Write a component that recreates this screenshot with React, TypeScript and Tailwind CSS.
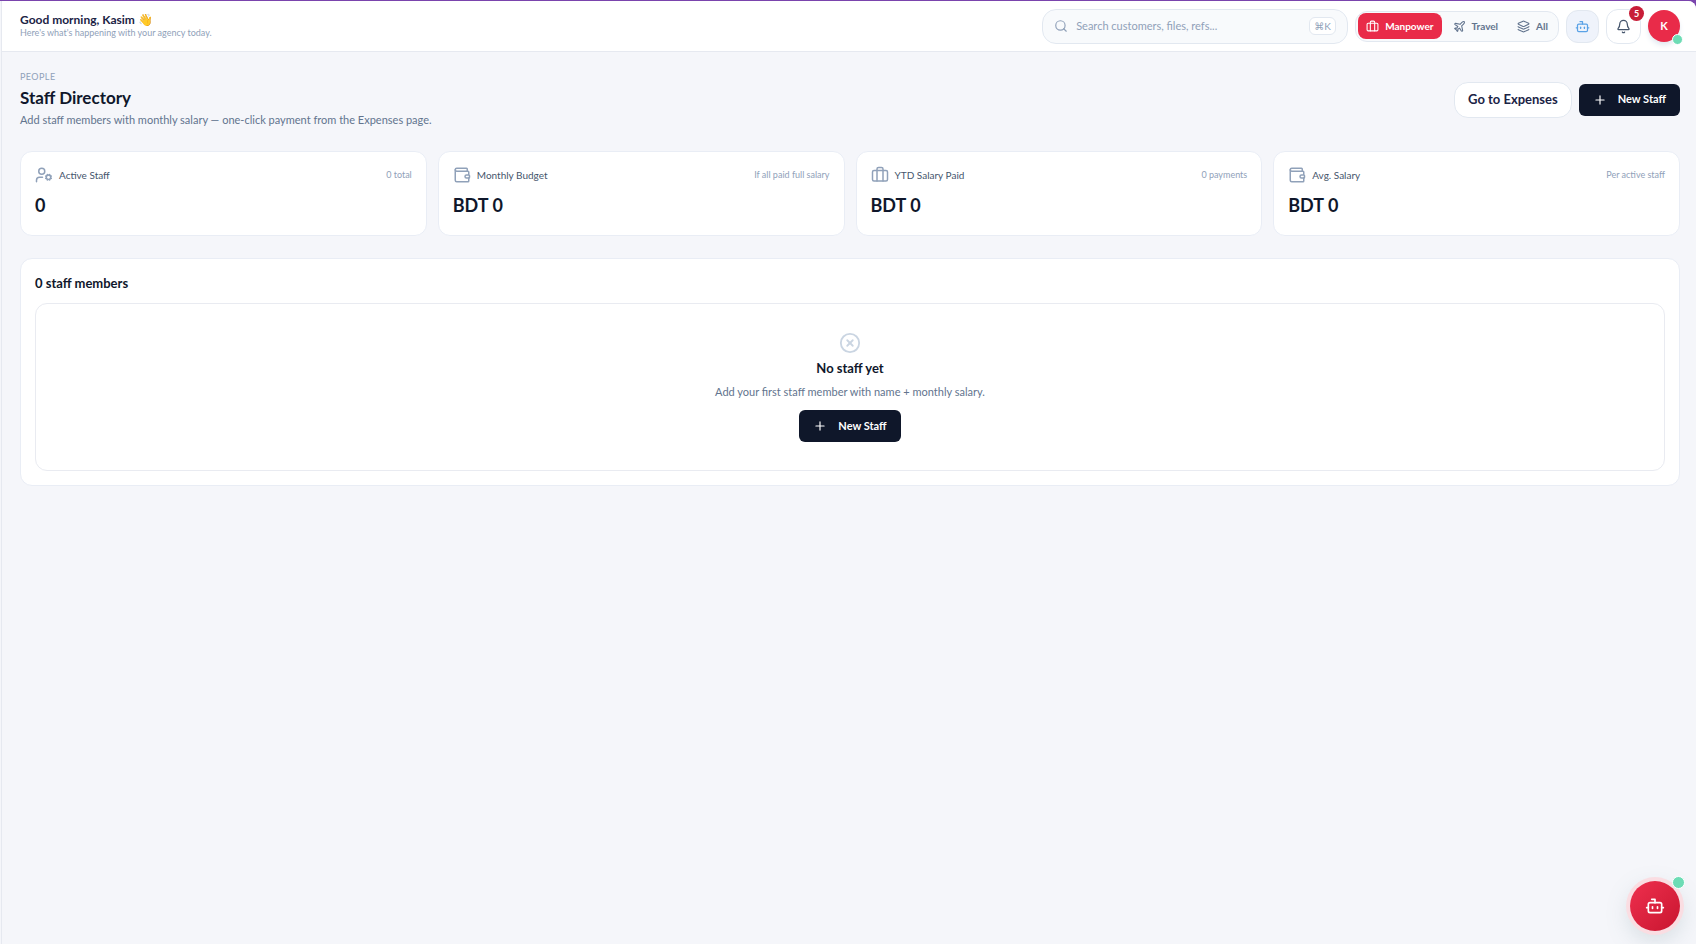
import { useState } from "react";
import type { LucideIcon } from "lucide-react";
import { Bell, Bot, Briefcase, CircleX, Layers, Plane, Plus, Search, UserCog, Wallet } from "lucide-react";
import clsx from "clsx";

interface Stat {
  icon: LucideIcon;
  label: string;
  hint: string;
  value: string;
}

const stats: Stat[] = [
  { icon: UserCog, label: "Active Staff", hint: "0 total", value: "0" },
  { icon: Wallet, label: "Monthly Budget", hint: "If all paid full salary", value: "BDT 0" },
  { icon: Briefcase, label: "YTD Salary Paid", hint: "0 payments", value: "BDT 0" },
  { icon: Wallet, label: "Avg. Salary", hint: "Per active staff", value: "BDT 0" },
];

const modes = [
  { icon: Briefcase, label: "Manpower" },
  { icon: Plane, label: "Travel" },
  { icon: Layers, label: "All" },
];

function NewStaffButton({ className }: { className?: string }) {
  return (
    <button
      className={clsx(
        "flex h-8 items-center gap-[11px] rounded-md bg-[#0f172a] px-[14px] text-[11px] font-bold text-white hover:bg-slate-800",
        className
      )}
    >
      <Plus size={14} strokeWidth={2} />
      New Staff
    </button>
  );
}

function ModeSwitch() {
  const [mode, setMode] = useState("Manpower");

  return (
    <div className="flex h-[31px] items-center gap-[3px] rounded-xl border border-slate-200 bg-slate-50 px-0.5">
      {modes.map(({ icon: Icon, label }) => (
        <button
          key={label}
          onClick={() => setMode(label)}
          className={clsx(
            "flex h-[26px] items-center gap-1.5 rounded-lg px-2 text-[10px] leading-4 font-bold",
            mode === label ? "bg-[#e92b49] text-white" : "text-slate-500"
          )}
        >
          <Icon size={13} strokeWidth={2} />
          {label}
        </button>
      ))}
    </div>
  );
}

function Header() {
  return (
    <header className="flex h-[51px] items-center justify-between border-b border-[#e6e9f0] bg-white pr-4 pl-[18px]">
      <div>
        <p className="text-[12px] leading-[14px] font-bold text-[#1b2345]">Good morning, Kasim 👋</p>
        <p className="text-[9px] leading-3 text-slate-400">Here's what's happening with your agency today.</p>
      </div>

      <div className="flex items-center gap-[7px]">
        <label className="flex h-[35px] w-[306px] items-center rounded-[14px] border border-slate-200 bg-slate-50 px-[11px] text-slate-400">
          <Search size={14} className="shrink-0" />
          <input
            type="text"
            aria-label="Search"
            placeholder="Search customers, files, refs..."
            className="ml-2 min-w-0 flex-1 bg-transparent text-[11px] leading-4 outline-none placeholder:text-slate-400"
          />
          <kbd className="flex h-[18px] w-[27px] items-center justify-center rounded-md border border-slate-200 bg-white font-['Lato','DejaVu_Sans',sans-serif] text-[10px]">
            ⌘K
          </kbd>
        </label>

        <ModeSwitch />

        <button
          aria-label="Assistant"
          className="flex size-[33px] items-center justify-center rounded-xl border border-slate-200 bg-[#eff3fb] text-[#5aa2e6]"
        >
          <Bot size={15} />
        </button>

        <button
          aria-label="Notifications"
          className="relative flex size-[35px] items-center justify-center rounded-xl border border-slate-200 bg-white text-slate-600"
        >
          <Bell size={15} />
          <span className="absolute -top-1 -right-1 flex size-[15px] items-center justify-center rounded-full bg-[#c81e38] text-[9px] leading-none font-bold text-white">
            5
          </span>
        </button>

        <button
          aria-label="Account"
          className="relative flex size-8 items-center justify-center rounded-full bg-[#e92b49] text-[11px] font-bold text-white shadow-md shadow-slate-200"
        >
          K
          <span className="absolute -right-[3px] -bottom-[3px] size-[11px] rounded-full border border-white bg-[#6ddcb5]" />
        </button>
      </div>
    </header>
  );
}

function StatCard({ icon: Icon, label, hint, value }: Stat) {
  return (
    <div className="rounded-xl border border-[#e9edf5] bg-white px-[14px] pt-[14px] pb-4">
      <div className="flex items-center gap-1.5">
        <Icon size={18} className="text-slate-400" />
        <span className="text-[10px] leading-4 text-slate-600">{label}</span>
        <span className="ml-auto text-[9px] leading-4 text-slate-400">{hint}</span>
      </div>
      <p className="mt-[7px] text-[18px] leading-7 font-bold text-slate-900">{value}</p>
    </div>
  );
}

export default function App() {
  return (
    <div className="min-h-screen border-t border-[#7a44ad] bg-[#7a44ad] font-['Lato','Noto_Sans',sans-serif]">
      <div className="flex min-h-[calc(100vh-1px)] overflow-hidden rounded-tr-lg bg-[#f5f6fa]">
        <div className="w-0.5 shrink-0 border-r border-[#e6e9f0]" />

        <div className="min-w-0 flex-1">
          <Header />

          <main className="pt-[19px] pr-4 pl-[18px]">
            <div className="flex items-center justify-between">
              <div>
                <p className="text-[9px] leading-3 tracking-wider text-slate-400 uppercase">People</p>
                <h1 className="mt-[3px] text-[17px] leading-6 font-bold text-slate-900">Staff Directory</h1>
                <p className="mt-0.5 text-[11px] leading-4 text-slate-500">
                  Add staff members with monthly salary — one-click payment from the Expenses page.
                </p>
              </div>
              <div className="flex items-center gap-[7px]">
                <button className="h-9 rounded-[14px] border border-slate-200 bg-white px-[13px] text-[13px] font-bold text-[#1b2345]">
                  Go to Expenses
                </button>
                <NewStaffButton />
              </div>
            </div>

            <section className="mt-[23px] grid grid-cols-4 gap-[11px]">
              {stats.map((stat) => (
                <StatCard key={stat.label} {...stat} />
              ))}
            </section>

            <section className="mt-[22px] rounded-xl border border-[#e9edf5] bg-white p-[14px]">
              <h2 className="text-[13px] leading-5 font-bold text-slate-900">0 staff members</h2>
              <div className="mt-2.5 flex flex-col items-center rounded-xl border border-[#e9ebf1] py-7">
                <CircleX size={22} className="text-slate-300" />
                <h3 className="mt-1 text-[13px] leading-5 font-bold text-slate-900">No staff yet</h3>
                <p className="mt-1.5 text-[11px] leading-4 text-slate-500">
                  Add your first staff member with name + monthly salary.
                </p>
                <NewStaffButton className="mt-2.5" />
              </div>
            </section>
          </main>
        </div>
      </div>

      <button
        aria-label="Open assistant"
        className="fixed right-4 bottom-[13px] flex size-[50px] items-center justify-center rounded-full bg-linear-to-br from-[#ef2f4e] to-[#c8142f] text-white shadow-[0_8px_24px_rgba(100,130,140,0.25)] ring-4 ring-[#fadde2]"
      >
        <Bot size={20} />
        <span className="absolute -top-[5px] -right-[5px] size-[13px] rounded-full border border-white bg-[#6ddcb5]" />
      </button>
    </div>
  );
}
